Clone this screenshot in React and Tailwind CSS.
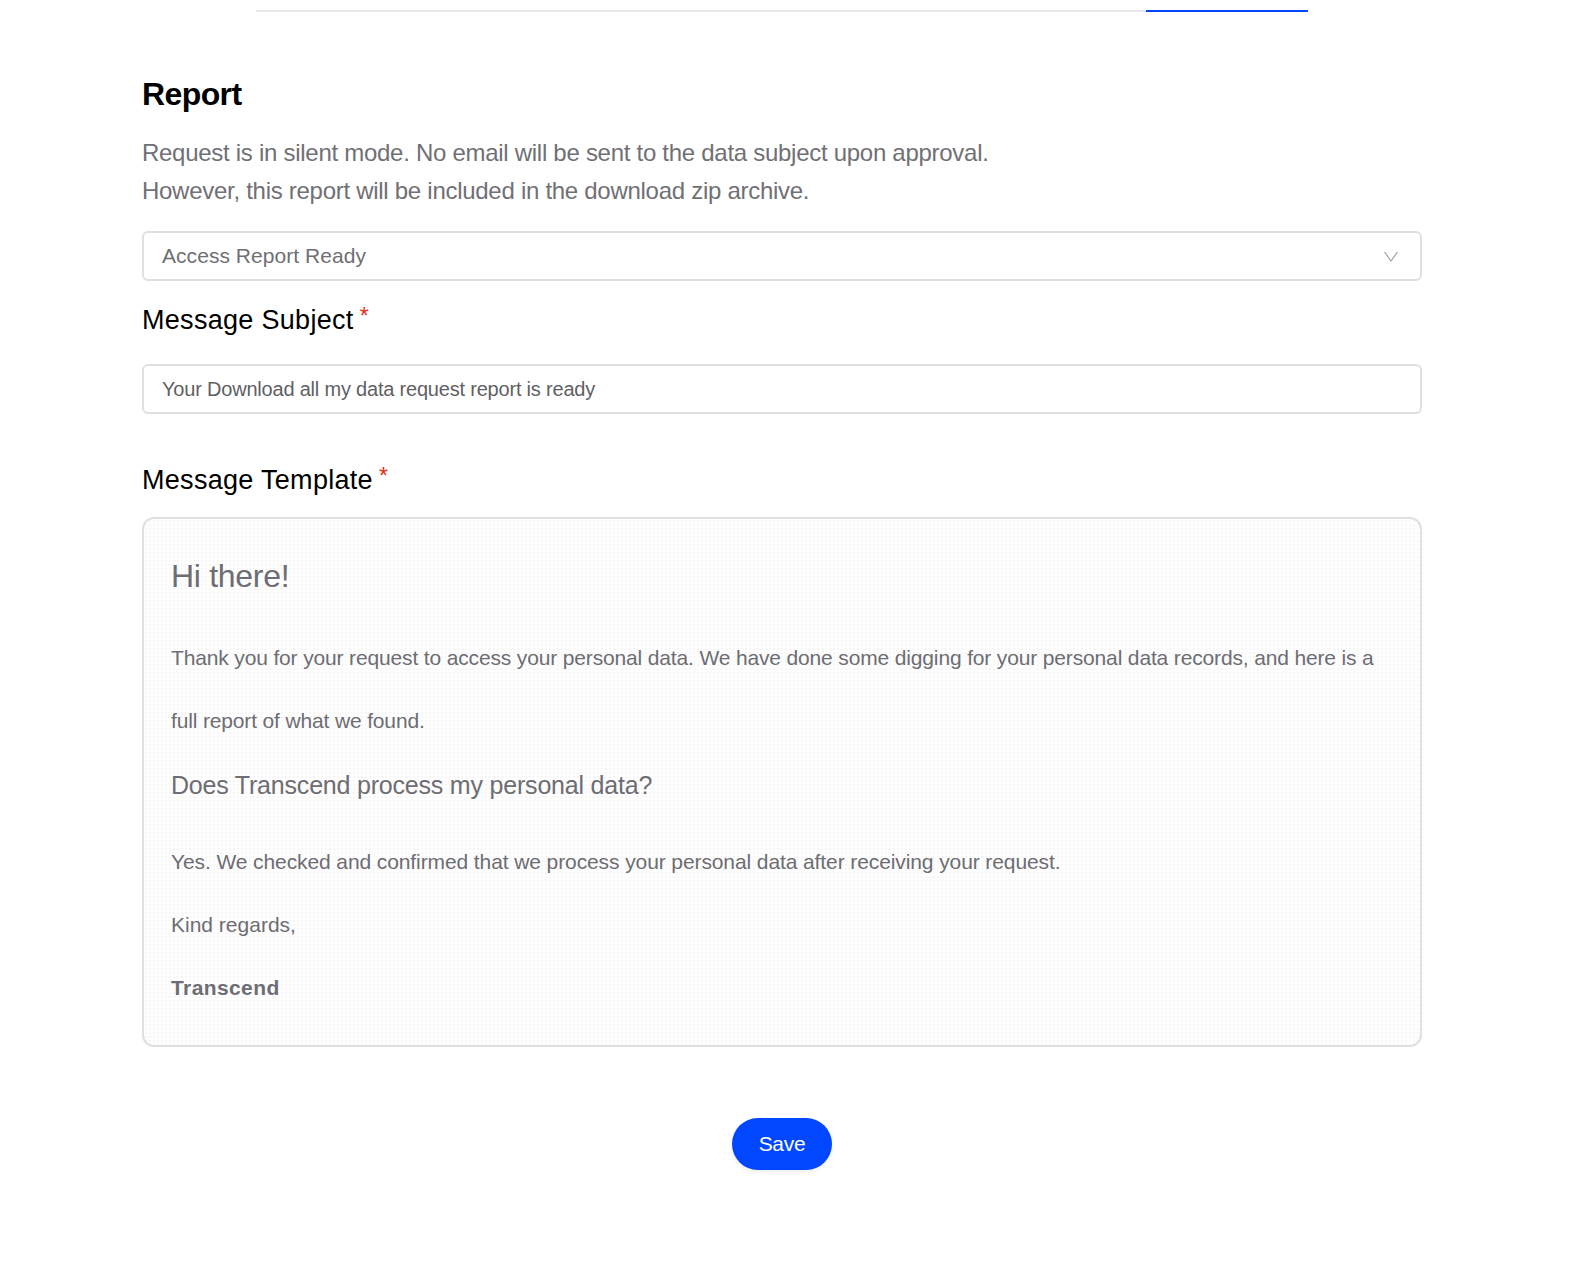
import React from "react";

const font = { fontFamily: '"Liberation Sans", Arial, sans-serif' };

function RequiredLabel({ children, className = "" }) {
  return (
    <label className={`flex items-start text-[27px] leading-[36px] tracking-[0.3px] text-black ${className}`}>
      {children}
      <span className="ml-[6px] pt-[3px] text-[23px] leading-[22px] text-[#e5311b]">*</span>
    </label>
  );
}

export default function App() {
  return (
    <div className="min-h-[1280px] w-full bg-white" style={font}>
      {/* tab underline */}
      <div className="pt-[10px] pl-[256px]">
        <div className="flex h-[2px] w-[1052px] bg-[#e9e9e9]">
          <div className="ml-auto h-[2px] w-[162px] bg-[#0047ff]" />
        </div>
      </div>

      <div className="ml-[142px] w-[1280px] pb-[110px]">
        <h2 className="mt-[62px] text-[32px] font-bold leading-[40px] tracking-[-0.6px] text-black">
          Report
        </h2>
        <p className="mt-[20px] text-[24px] leading-[38px] tracking-[-0.28px] text-[#707075]">
          Request is in silent mode. No email will be sent to the data subject upon approval.
          <br />
          However, this report will be included in the download zip archive.
        </p>

        <button className="mt-[21px] flex h-[50px] w-full items-center justify-between rounded-[6px] border-2 border-[#e0e0e0] bg-white pl-[18px] pr-[20px] text-left">
          <span className="text-[21px] tracking-[0.05px] text-[#6f6f74]">Access Report Ready</span>
          <svg width="16" height="11" viewBox="0 0 16 11" fill="none" className="mr-[1px]">
            <path d="M1.5 1l6.5 9 6.5-9" stroke="#a3a3a3" strokeWidth="1.2" />
          </svg>
        </button>

        <RequiredLabel className="mt-[21px]">Message Subject</RequiredLabel>

        <div className="mt-[26px] flex h-[50px] w-full items-center rounded-[6px] border-2 border-[#e0e0e0] bg-white pl-[18px]">
          <span className="text-[20px] tracking-[-0.2px] text-[#5f5f64]">
            Your Download all my data request report is ready
          </span>
        </div>

        <RequiredLabel className="mt-[48px]">Message Template</RequiredLabel>

        <div className="mt-[19px] h-[530px] w-full rounded-[12px] border-2 border-[#e0e0e0] bg-[#fefefe] bg-[radial-gradient(circle,#f6f6f6_0.7px,transparent_0.8px)] bg-[length:4px_4px] pl-[27px] pr-[27px] pt-[37px] text-[#6d6d73]">
          <h1 className="text-[32px] leading-[40px] tracking-[-0.3px]">Hi there!</h1>
          <p className="mt-[30px] text-[21px] leading-[63px] tracking-[-0.15px]">
            <span className="whitespace-nowrap">
              Thank you for your request to access your personal data. We have done some digging for your personal data records, and here is a
            </span>
            <br />
            full report of what we found.
          </p>
          <h3 className="mt-[15px] text-[25px] leading-[36px] tracking-[-0.2px]">
            Does Transcend process my personal data?
          </h3>
          <p className="mt-[27px] text-[21px] leading-[63px] tracking-[-0.1px]">
            Yes. We checked and confirmed that we process your personal data after receiving your request.
          </p>
          <p className="text-[21px] leading-[63px] tracking-[0px]">Kind regards,</p>
          <p className="text-[21px] font-bold leading-[63px] tracking-[0.4px]">Transcend</p>
        </div>

        <div className="mt-[71px] flex justify-center">
          <button className="h-[52px] w-[100px] rounded-full bg-[#0047ff] text-[21px] tracking-[-0.3px] text-white shadow-[0_2px_4px_rgba(0,0,0,0.08)]">
            Save
          </button>
        </div>
      </div>
    </div>
  );
}
